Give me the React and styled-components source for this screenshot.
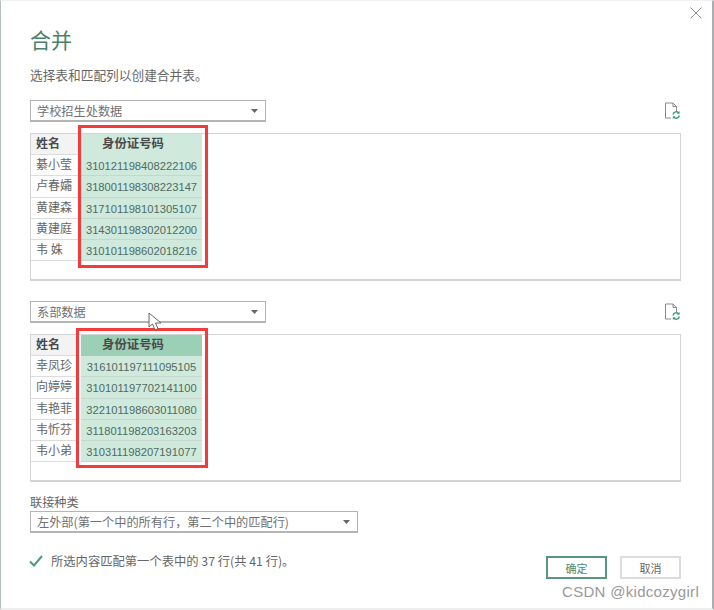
import React from "react";
import styled, { createGlobalStyle } from "styled-components";

const firstTable = {
  source: "学校招生处数据",
  active: false,
  rows: [
    ["綦小莹", "310121198408222106"],
    ["卢春孀", "318001198308223147"],
    ["黄建森", "317101198101305107"],
    ["黄建庭", "314301198302012200"],
    ["韦 姝", "310101198602018216"],
  ],
};

const secondTable = {
  source: "系部数据",
  active: true,
  rows: [
    ["幸凤珍", "316101197111095105"],
    ["向婷婷", "310101197702141100"],
    ["韦艳菲", "322101198603011080"],
    ["韦忻芬", "311801198203163203"],
    ["韦小弟", "310311198207191077"],
  ],
};

function Caret() {
  return (
    <svg width="7" height="4" viewBox="0 0 7 4">
      <path d="M0 0h7L3.5 4z" fill="#666" />
    </svg>
  );
}

function RefreshIcon() {
  return (
    <svg width="17" height="18" viewBox="0 0 17 18" fill="none">
      <path d="M1.5 1h7.5l3.5 3.5V9M9 1v3.5h3.5M7 16H1.5V1" stroke="#8a8a8a" strokeWidth="1" />
      <path d="M9 12.5a3.4 3.4 0 0 1 5.8-1.6M15.4 13.5a3.4 3.4 0 0 1-5.8 1.6" stroke="#3f9c7c" strokeWidth="1.4" />
      <path d="M15.6 9l0 2.8-2.8 0zM8.8 17l0-2.8 2.8 0z" fill="#3f9c7c" />
    </svg>
  );
}

function Preview({ table }) {
  return (
    <Panel>
      <Columns>
        <NameColumn>
          <NameHead>姓名</NameHead>
          {table.rows.map((row) => (
            <NameCell key={row[1]}>{row[0]}</NameCell>
          ))}
        </NameColumn>
        <IdColumn>
          <IdHead $active={table.active}>身份证号码</IdHead>
          {table.rows.map((row) => (
            <IdCell key={row[1]}>{row[1]}</IdCell>
          ))}
        </IdColumn>
      </Columns>
      <RedBox $active={table.active} />
    </Panel>
  );
}

function SourceBlock({ table }) {
  return (
    <Block>
      <SourceRow>
        <Select $width={236}>
          {table.source}
          <Caret />
        </Select>
        <RefreshIcon />
      </SourceRow>
      <Preview table={table} />
    </Block>
  );
}

export default function App() {
  return (
    <>
      <Global />
      <Dialog>
        <CloseIcon viewBox="0 0 12 12">
          <path d="M0.5 0.5l11 11M11.5 0.5l-11 11" stroke="#8c8c8c" strokeWidth="1" />
        </CloseIcon>
        <Title>合并</Title>
        <Intro>选择表和匹配列以创建合并表。</Intro>
        <SourceBlock table={firstTable} />
        <SourceBlock table={secondTable} />
        <JoinLabel>联接种类</JoinLabel>
        <Select $width={328}>
          左外部(第一个中的所有行，第二个中的匹配行)
          <Caret />
        </Select>
        <Footer>
          <Status>
            <svg width="14" height="12" viewBox="0 0 14 12" fill="none">
              <path d="M1 6.5l4 4L13 1" stroke="#4d9a80" strokeWidth="2" />
            </svg>
            所选内容匹配第一个表中的 37 行(共 41 行)。
          </Status>
          <Buttons>
            <Button $primary>确定</Button>
            <Button>取消</Button>
          </Buttons>
        </Footer>
        <Cursor width="16" height="20" viewBox="0 0 16 20">
          <path d="M1 1v14l3.5-3 2.5 6 3-1.3-2.5-5.7H13z" fill="#fff" stroke="#666" strokeWidth="1" />
        </Cursor>
        <Watermark>CSDN @kidcozygirl</Watermark>
      </Dialog>
    </>
  );
}

const Global = createGlobalStyle`
  html, body {
    margin: 0;
    padding: 0;
    background: #fff;
  }
  body {
    font-family: "Noto Sans CJK SC", "Liberation Sans", sans-serif;
  }
`;

const Dialog = styled.div`
  position: relative;
  box-sizing: border-box;
  width: 714px;
  height: 610px;
  padding: 25px 31px 0 29px;
  background: #fff;
  border-left: 1px solid #b9c0c0;
  border-right: 2px solid #a9b0b0;
  border-bottom: 2px solid #eeeeee;
  border-top: 1px solid #f2f2f2;
  color: #666;
  overflow: hidden;
`;

const CloseIcon = styled.svg`
  position: absolute;
  top: 6px;
  left: 689px;
  width: 12px;
  height: 12px;
`;

const Title = styled.h1`
  margin: 0;
  height: 26px;
  font-size: 21px;
  line-height: 26px;
  font-weight: 400;
  color: #4b8069;
`;

const Intro = styled.p`
  margin: 13px 0 0;
  height: 20px;
  font-size: 12.7px;
  line-height: 20px;
  color: #666;
`;

const Block = styled.section`
  margin-top: 15px;
  & + & {
    margin-top: 20px;
  }
`;

const SourceRow = styled.div`
  display: flex;
  align-items: center;
  justify-content: space-between;
  height: 22px;
  margin-bottom: 11px;
`;

const Select = styled.div`
  box-sizing: border-box;
  display: flex;
  align-items: center;
  justify-content: space-between;
  width: ${(p) => p.$width}px;
  height: 22px;
  padding: 0 7px 0 6px;
  border: 1px solid #b4b4b4;
  border-bottom-width: 2px;
  font-size: 12.2px;
  color: #707070;
  background: #fff;
`;

const Panel = styled.div`
  position: relative;
  box-sizing: border-box;
  width: 651px;
  height: 148px;
  border: 1px solid #d4d4d4;
  border-bottom-width: 2px;
`;

const Columns = styled.div`
  display: flex;
  gap: 3px;
`;

const NameColumn = styled.div`
  width: 47px;
  display: flex;
  flex-direction: column;
`;

const IdColumn = styled.div`
  width: 121px;
  display: flex;
  flex-direction: column;
`;

const NameHead = styled.div`
  height: 21px;
  padding-left: 5px;
  font-size: 12px;
  line-height: 18px;
  font-weight: 700;
  color: #4a4a4a;
  background: #f3f3f3;
  border-bottom: 1px solid #dcdcdc;
  box-sizing: border-box;
`;

const NameCell = styled.div`
  height: 21.3px;
  padding-left: 5px;
  font-size: 12px;
  line-height: 17px;
  color: #666;
  border-bottom: 1px solid #dcdcdc;
  box-sizing: border-box;
`;

const IdHead = styled.div`
  height: 21px;
  padding-left: 21px;
  font-size: 12.4px;
  line-height: 18px;
  font-weight: 700;
  color: #4a4a4a;
  background: ${(p) => (p.$active ? "#9bcfb6" : "#cfe9dc")};
  box-sizing: border-box;
`;

const IdCell = styled.div`
  height: 21.3px;
  text-align: center;
  font-family: "Liberation Sans", sans-serif;
  font-size: 11.2px;
  line-height: 22px;
  color: #4f6b62;
  background: #cfe9dc;
  border-bottom: 1px solid #c5d6cd;
  box-sizing: border-box;
`;

const RedBox = styled.div`
  position: absolute;
  top: ${(p) => (p.$active ? "-7px" : "-9px")};
  left: ${(p) => (p.$active ? "45px" : "47px")};
  width: ${(p) => (p.$active ? "132px" : "130px")};
  height: ${(p) => (p.$active ? "140px" : "143px")};
  box-sizing: border-box;
  border: 3px solid #f43b3b;
`;

const JoinLabel = styled.div`
  margin-top: 11px;
  height: 18px;
  font-size: 12.2px;
  line-height: 18px;
  color: #666;
`;

const Footer = styled.div`
  display: flex;
  align-items: flex-start;
  justify-content: space-between;
  margin-top: 20px;
`;

const Status = styled.div`
  display: flex;
  align-items: center;
  gap: 8px;
  height: 16px;
  margin-left: -1px;
  font-size: 12.3px;
  color: #666;
`;

const Buttons = styled.div`
  display: flex;
  gap: 13px;
  margin-top: 3px;
`;

const Button = styled.button`
  box-sizing: border-box;
  width: 61px;
  height: 23px;
  padding: 0;
  font-family: inherit;
  font-size: 11px;
  background: #fff;
  color: ${(p) => (p.$primary ? "#4d8a72" : "#666")};
  border: ${(p) => (p.$primary ? "2px solid #5a9580" : "2px solid #dcdcdc")};
`;

const Cursor = styled.svg`
  position: absolute;
  top: 311px;
  left: 147px;
`;

const Watermark = styled.div`
  position: absolute;
  top: 582px;
  left: 561px;
  font-family: "Liberation Sans", sans-serif;
  font-size: 15px;
  letter-spacing: 0.3px;
  color: #999;
`;
